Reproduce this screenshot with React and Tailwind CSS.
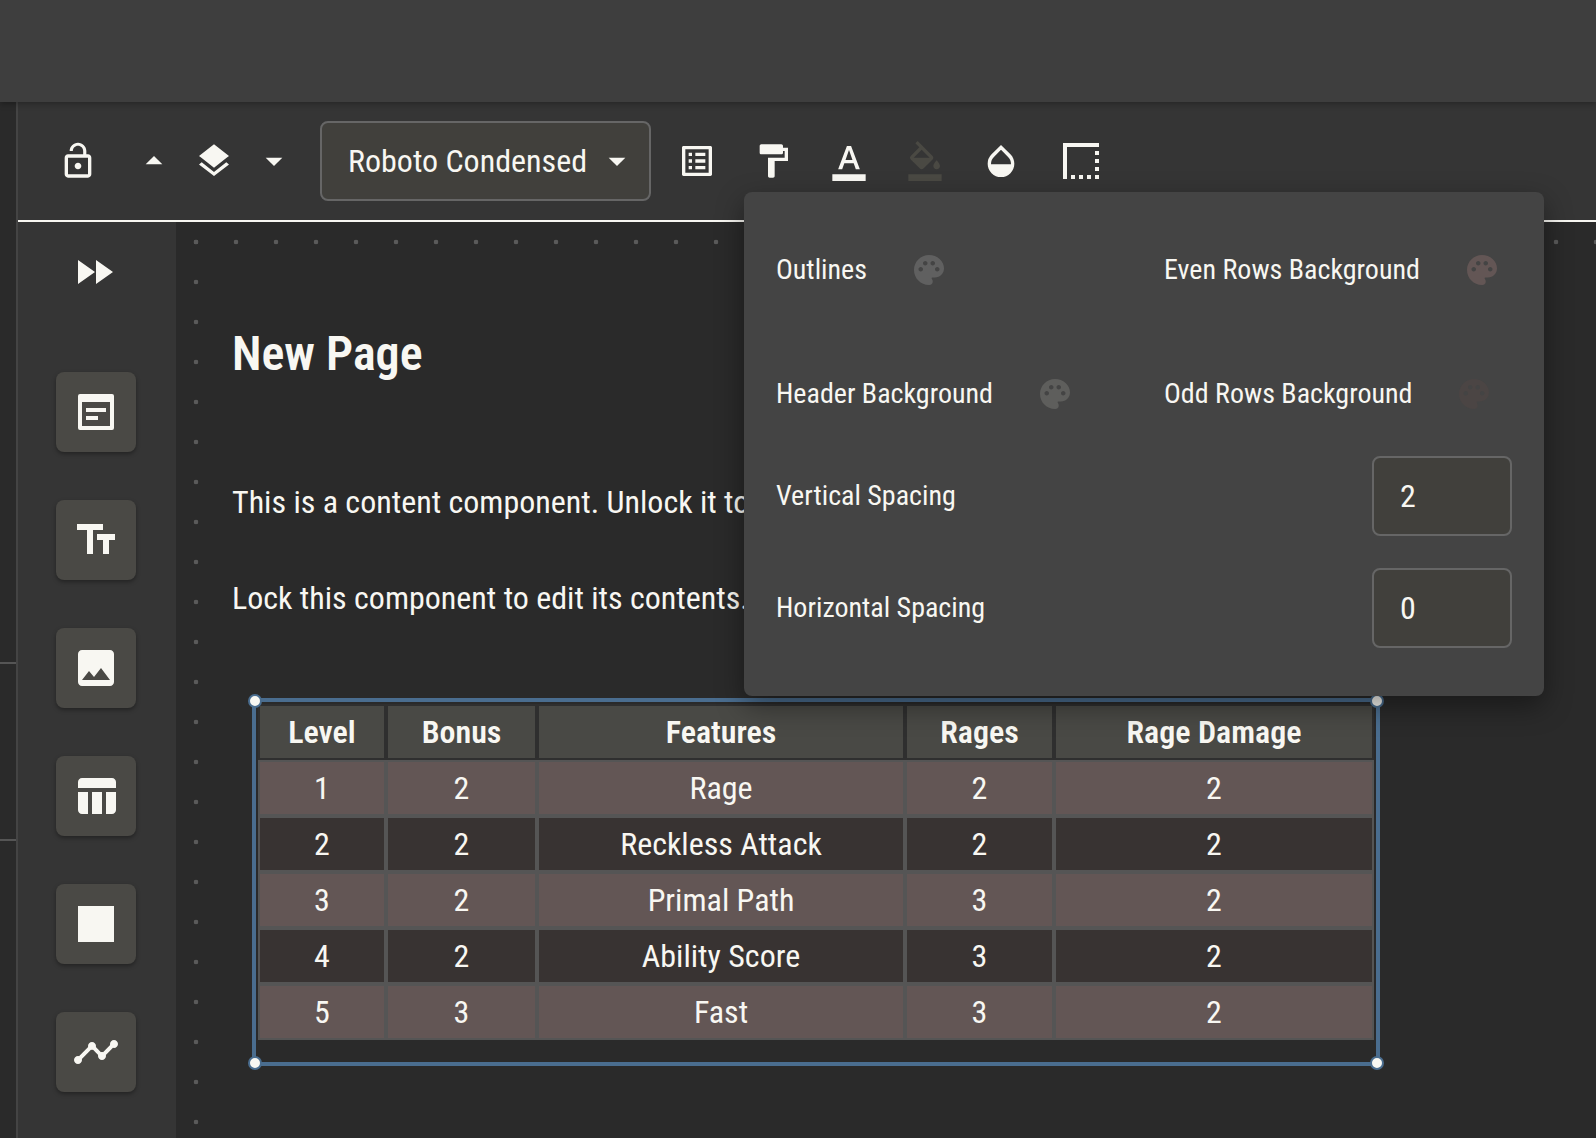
import React from 'react';
import {
  MdLockOpen, MdArrowDropUp, MdArrowDropDown, MdLayers, MdListAlt, MdFormatPaint,
  MdFormatColorText, MdFormatColorFill, MdOpacity, MdBorderStyle, MdPalette,
  MdFastForward, MdTextFields, MdImage, MdTableChart, MdTimeline,
} from 'react-icons/md';

const rows = [
  ['1', '2', 'Rage', '2', '2'],
  ['2', '2', 'Reckless Attack', '2', '2'],
  ['3', '2', 'Primal Path', '3', '2'],
  ['4', '2', 'Ability Score', '3', '2'],
  ['5', '3', 'Fast', '3', '2'],
];
const headers = ['Level', 'Bonus', 'Features', 'Rages', 'Rage Damage'];

const ArticleIcon = () => (
  <svg width="36" height="36" viewBox="0 0 36 36" fill="currentColor">
    <path fillRule="evenodd" d="M2 0h32a2 2 0 0 1 2 2v32a2 2 0 0 1-2 2H2a2 2 0 0 1-2-2V2a2 2 0 0 1 2-2zM4 8v24h28V8z" />
    <rect x="8" y="14" width="20" height="4" />
    <rect x="8" y="22" width="12" height="4" />
  </svg>
);

const SquareIcon = () => (
  <svg width="36" height="36" viewBox="0 0 36 36" fill="currentColor">
    <rect width="36" height="36" />
  </svg>
);

const ToolIcon = ({ children }) => (
  <div className="w-[76px] h-[80px] flex items-center justify-center">{children}</div>
);

const SideButton = ({ children }) => (
  <button className="w-[80px] h-[80px] ml-[38px] mb-[48px] shrink-0 flex items-center justify-center rounded-lg bg-[#4a4945] text-[#f8f7f2] shadow-[0_2px_4px_rgba(0,0,0,0.35)]">
    {children}
  </button>
);

const Swatch = ({ label, color }) => (
  <div className="h-[90px] flex items-center gap-[44px]">
    <span className="text-[28px] leading-[40px]">{label}</span>
    <MdPalette size={36} color={color} />
  </div>
);

const NumberRow = ({ label, value }) => (
  <div className="flex items-center justify-between">
    <span className="text-[28px] leading-[40px]">{label}</span>
    <div className="w-[140px] h-[80px] pl-[26px] flex items-center rounded-lg border-2 border-[#666] bg-[#41403c] text-[32px]">
      {value}
    </div>
  </div>
);

const Handle = ({ className }) => (
  <div className={`absolute w-[14px] h-[14px] rounded-full bg-[#f8f7f2] border-2 border-[#4a6d8f] ${className}`} />
);

export default function App() {
  return (
    <div className="w-[1596px] h-[1138px] overflow-hidden flex flex-col bg-[#2a2a2a] text-[#f8f7f2] [font-family:Roboto,sans-serif] font-stretch-[75%]">
      <div className="h-[102px] shrink-0 bg-[#3e3e3e] relative z-10 shadow-[0_2px_6px_rgba(0,0,0,0.3)]" />

      <div className="flex-1 flex min-h-0">
        <div className="w-[18px] shrink-0 bg-[#2a2a2a] border-r-2 border-[#444] pt-[560px]">
          <div className="h-[2px] bg-[#555]" />
          <div className="h-[2px] bg-[#555] mt-[175px]" />
        </div>

        <div className="flex-1 flex flex-col min-w-0">
          {/* toolbar */}
          <div className="h-[120px] shrink-0 flex items-start pt-[19px] bg-[#353535] border-b-2 border-[#f8f7f2]">
            <div className="w-[40px] h-[80px] ml-[40px] flex items-center justify-center"><MdLockOpen size={40} /></div>
            <div className="w-[40px] h-[80px] ml-[36px] flex items-center justify-center"><MdArrowDropUp size={40} /></div>
            <div className="w-[40px] h-[80px] ml-[20px] flex items-center justify-center"><MdLayers size={40} /></div>
            <div className="w-[40px] h-[80px] ml-[20px] flex items-center justify-center"><MdArrowDropDown size={40} /></div>
            <div className="w-[331px] h-[80px] ml-[26px] pl-[26px] pr-[12px] flex items-center justify-between rounded-lg border-2 border-[#666] bg-[#41403c] text-[32px]">
              <span>Roboto Condensed</span>
              <MdArrowDropDown size={40} />
            </div>
            <div className="flex ml-[8px]">
              <ToolIcon><MdListAlt size={40} /></ToolIcon>
              <ToolIcon><MdFormatPaint size={40} /></ToolIcon>
              <ToolIcon><MdFormatColorText size={40} /></ToolIcon>
              <ToolIcon><MdFormatColorFill size={40} color="#4a4943" /></ToolIcon>
              <ToolIcon><MdOpacity size={40} /></ToolIcon>
              <div className="w-[84px] h-[80px] flex items-center justify-center"><MdBorderStyle size={48} /></div>
            </div>
          </div>

          <div className="flex-1 flex min-h-0 relative">
            {/* sidebar */}
            <div className="w-[158px] shrink-0 bg-[#353535] flex flex-col">
              <div className="h-[48px] mt-[26px] ml-[52px]"><MdFastForward size={48} /></div>
              <div className="h-[2px] w-[128px] ml-[14px] mt-[42px] mb-[34px] bg-[#666]" />
              <SideButton><ArticleIcon /></SideButton>
              <SideButton><MdTextFields size={48} /></SideButton>
              <SideButton><MdImage size={48} /></SideButton>
              <SideButton><MdTableChart size={48} /></SideButton>
              <SideButton><SquareIcon /></SideButton>
              <SideButton><MdTimeline size={48} /></SideButton>
            </div>

            {/* canvas */}
            <div className="flex-1 min-w-0 bg-[#2a2a2a] bg-[radial-gradient(circle,#5a5a5a_2px,transparent_2.6px),radial-gradient(circle,#5a5a5a_2px,transparent_2.6px)] bg-[length:40px_40px] [background-repeat:repeat-x,repeat-y]">
              <h1 className="ml-[56px] mt-[100px] text-[48px] leading-[64px] font-semibold">New Page</h1>
              <p className="ml-[56px] mt-[92px] text-[32px] leading-[48px] whitespace-nowrap">This is a content component. Unlock it to</p>
              <p className="ml-[56px] mt-[48px] text-[32px] leading-[48px] whitespace-nowrap">Lock this component to edit its contents.</p>

              <div className="relative w-[1128px] h-[368px] ml-[76px] mt-[76px] p-[2px] border-4 border-[#4a6d8f]">
                <Handle className="-left-[8px] -top-[8px]" />
                <Handle className="-right-[8px] -top-[8px]" />
                <Handle className="-left-[8px] -bottom-[8px]" />
                <Handle className="-right-[8px] -bottom-[8px]" />
                <table className="w-[1116px] table-fixed border-separate border-spacing-0 text-[32px] text-center">
                  <colgroup>
                    <col className="w-[128px]" />
                    <col className="w-[151px]" />
                    <col className="w-[368px]" />
                    <col className="w-[149px]" />
                    <col className="w-[320px]" />
                  </colgroup>
                  <thead>
                    <tr className="h-[56px]">
                      {headers.map((h) => (
                        <th key={h} className="p-0 border-2 border-[#2f2f2f] bg-[#494945] font-semibold">{h}</th>
                      ))}
                    </tr>
                  </thead>
                  <tbody>
                    {rows.map((row, i) => (
                      <tr key={i} className="h-[56px]">
                        {row.map((cell, j) => (
                          <td key={j} className={`p-0 border-2 border-[#555] ${i % 2 === 0 ? 'bg-[#635655]' : 'bg-[#383332]'}`}>{cell}</td>
                        ))}
                      </tr>
                    ))}
                  </tbody>
                </table>
              </div>
            </div>
          </div>
        </div>
      </div>

      {/* table style popover */}
      <div className="absolute left-[744px] top-[192px] z-20 w-[800px] h-[504px] px-[32px] pt-[33px] rounded-lg bg-[#444444] shadow-[0_10px_28px_rgba(0,0,0,0.4)]">
        <div className="grid grid-cols-2 gap-x-[40px] gap-y-[34px]">
          <Swatch label="Outlines" color="#606060" />
          <Swatch label="Even Rows Background" color="#635655" />
          <Swatch label="Header Background" color="#5e5e5c" />
          <Swatch label="Odd Rows Background" color="#4b4544" />
        </div>
        <div className="mt-[17px] flex flex-col gap-[32px]">
          <NumberRow label="Vertical Spacing" value="2" />
          <NumberRow label="Horizontal Spacing" value="0" />
        </div>
      </div>
    </div>
  );
}
